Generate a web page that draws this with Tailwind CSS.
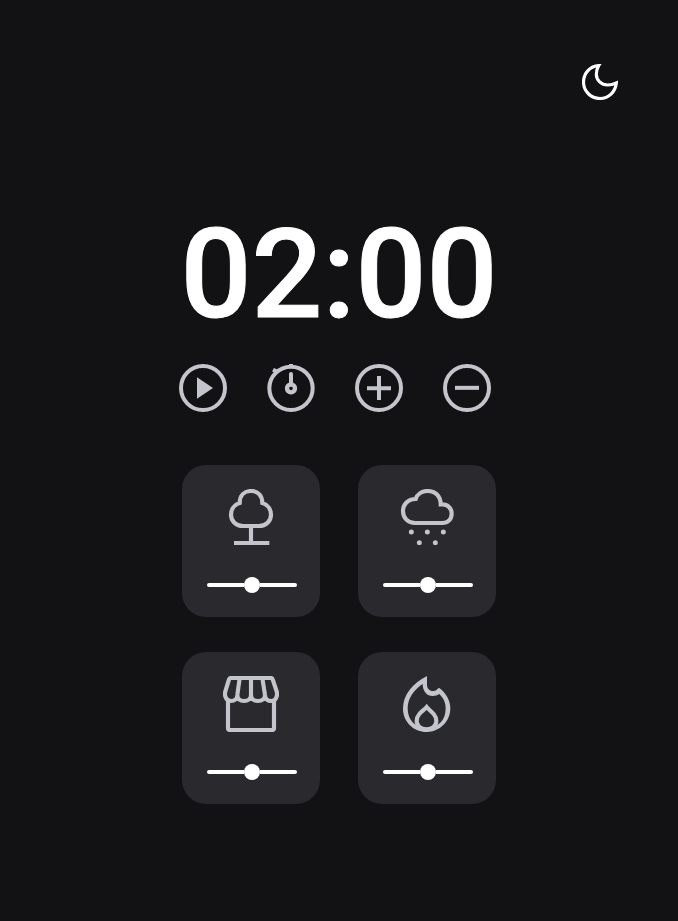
<!DOCTYPE html>
<html lang="en">
<head>
<meta charset="utf-8">
<title>Focus Timer</title>
<script src="https://cdn.jsdelivr.net/npm/@tailwindcss/browser@4"></script>
</head>
<body class="bg-[#121214] text-white h-[921px] overflow-hidden">
<header class="flex justify-end pt-16 pr-[60px]">
  <button aria-label="Dark mode" class="block size-9">
    <svg class="size-9" viewBox="0 0 108 108" fill="none" stroke="currentColor" stroke-width="9.500" stroke-linejoin="miter"><path d="M50 5C25 6 4.500 27 4.500 54C4.500 82 27 103.500 54 103.500C80 103.500 100 84 103 57C94 61 87 63 77 63C58 63 43 49 43 31C43 21 45 13 50 5Z"/></svg>
  </button>
</header>
<main class="w-[314px] ml-[182px] mt-[122px]">
  <div class="h-[106px] flex items-center justify-center font-[Roboto,sans-serif] font-medium text-[125px] leading-[100px] whitespace-nowrap [-webkit-text-stroke:1px_white]">02:00</div>
  <div class="mt-9 -ml-[3px] flex gap-10 text-[#c4c4cc]">
    <button aria-label="Play" class="size-12">
      <svg class="size-12" viewBox="0 0 144 144"><circle cx="72" cy="72" r="66" fill="none" stroke="currentColor" stroke-width="12"/><path fill="currentColor" d="M54 40L102 72L54 104Z"/></svg>
    </button>
    <button aria-label="Set timer" class="size-12">
      <svg class="size-12" viewBox="0 0 144 144" fill="none" stroke="currentColor"><circle cx="72" cy="73" r="65" stroke-width="12"/><path d="M66 5H78M18 17L28 22" stroke-width="12"/><path d="M72 30V62" stroke-width="12" stroke-linecap="round"/><circle cx="72" cy="73" r="12" stroke-width="13"/></svg>
    </button>
    <button aria-label="Add time" class="size-12">
      <svg class="size-12" viewBox="0 0 144 144" fill="none" stroke="currentColor" stroke-width="12"><circle cx="72" cy="72" r="66"/><path d="M36 72.500H108M72 36V108"/></svg>
    </button>
    <button aria-label="Remove time" class="size-12">
      <svg class="size-12" viewBox="0 0 144 144" fill="none" stroke="currentColor" stroke-width="12"><circle cx="72" cy="72" r="66"/><path d="M36 71.500H108"/></svg>
    </button>
  </div>
  <div class="mt-[53px] grid grid-cols-2 gap-x-[38px] gap-y-[35px] text-[#c4c4cc]">
    <section class="h-[152px] rounded-3xl bg-[#29292e] pt-6">
      <svg class="size-14 ml-[41px]" viewBox="0 0 168 168" fill="none" stroke="currentColor" stroke-width="12.500"><path d="M60 111H108C129 111 144 96 144 77C144 61 134 47 118 42C118 19 104 6 84 6C64 6 50 19 50 42C34 47 24 61 24 77C24 96 39 111 60 111ZM84 111V162M33 162H139"/></svg>
      <div class="mt-8 ml-[25px] w-[90px] h-4 flex items-center"><span class="h-1 w-[37px] rounded-l-full bg-white"></span><span class="size-4 rounded-full bg-white"></span><span class="h-1 w-[37px] rounded-r-full bg-white"></span></div>
    </section>
    <section class="h-[152px] rounded-3xl bg-[#29292e] pt-6">
      <svg class="size-14 ml-[41px]" viewBox="0 0 168 168" fill="none" stroke="currentColor" stroke-width="12.500"><path d="M48 102H130C147 102 158 90 158 74C158 58 146 46 130 46H125C125 21 109 6 85 6C69 6 55 15 50 30C27 30 12 46 12 66C12 87 27 102 48 102Z"/><g fill="currentColor" stroke="none"><circle cx="37" cy="129" r="7.500"/><circle cx="85" cy="129" r="7.500"/><circle cx="133" cy="129" r="7.500"/><circle cx="61" cy="161" r="7.500"/><circle cx="109" cy="161" r="7.500"/></g></svg>
      <div class="mt-8 ml-[25px] w-[90px] h-4 flex items-center"><span class="h-1 w-[37px] rounded-l-full bg-white"></span><span class="size-4 rounded-full bg-white"></span><span class="h-1 w-[37px] rounded-r-full bg-white"></span></div>
    </section>
    <section class="h-[152px] rounded-3xl bg-[#29292e] pt-6">
      <svg class="size-14 ml-[41px]" viewBox="0 0 168 168" fill="none" stroke="currentColor" stroke-width="12.500" stroke-linejoin="round"><path d="M15 74V156Q15 162 21 162H147Q153 162 153 156V74"/><path d="M24 6H144Q148 6 149 10L161 46C165 62 157 75 145 75C134 75 126 68 126 57C126 68 117 75 105 75C93 75 84 68 84 57C84 68 75 75 63 75C51 75 43 68 43 57C43 68 34 75 24 75C11 75 3 62 7 46L18 10Q20 6 24 6ZM50 6L43 57M84 6V57M118 6L126 57"/></svg>
      <div class="mt-8 ml-[25px] w-[90px] h-4 flex items-center"><span class="h-1 w-[37px] rounded-l-full bg-white"></span><span class="size-4 rounded-full bg-white"></span><span class="h-1 w-[37px] rounded-r-full bg-white"></span></div>
    </section>
    <section class="h-[152px] rounded-3xl bg-[#29292e] pt-6">
      <svg class="size-14 ml-[41px]" viewBox="0 0 168 168"><path fill="currentColor" fill-rule="evenodd" d="M84 0C40 22 12 57 12 98C12 137 44 168 83 168C122 168 154 137 154 97C154 73 141 51 120 35L113 41C100 51 84 42 84 27ZM71 24C71 46 84 60 101 60C109 60 116 58 121 54C134 66 140 80 140 97C140 133 118 156 83 156C48 156 26 132 26 97C26 68 44 42 71 24Z"/><path fill="#29292e" stroke="currentColor" stroke-width="12.500" d="M83 93C76 101 67 107 61 114C55 121 53 127 53 135C53 150 66 160 82.500 160C99 160 112 150 112 135C112 127 110 121 104 114C98 107 90 101 83 93Z"/></svg>
      <div class="mt-8 ml-[25px] w-[90px] h-4 flex items-center"><span class="h-1 w-[37px] rounded-l-full bg-white"></span><span class="size-4 rounded-full bg-white"></span><span class="h-1 w-[37px] rounded-r-full bg-white"></span></div>
    </section>
  </div>
</main>
</body>
</html>
